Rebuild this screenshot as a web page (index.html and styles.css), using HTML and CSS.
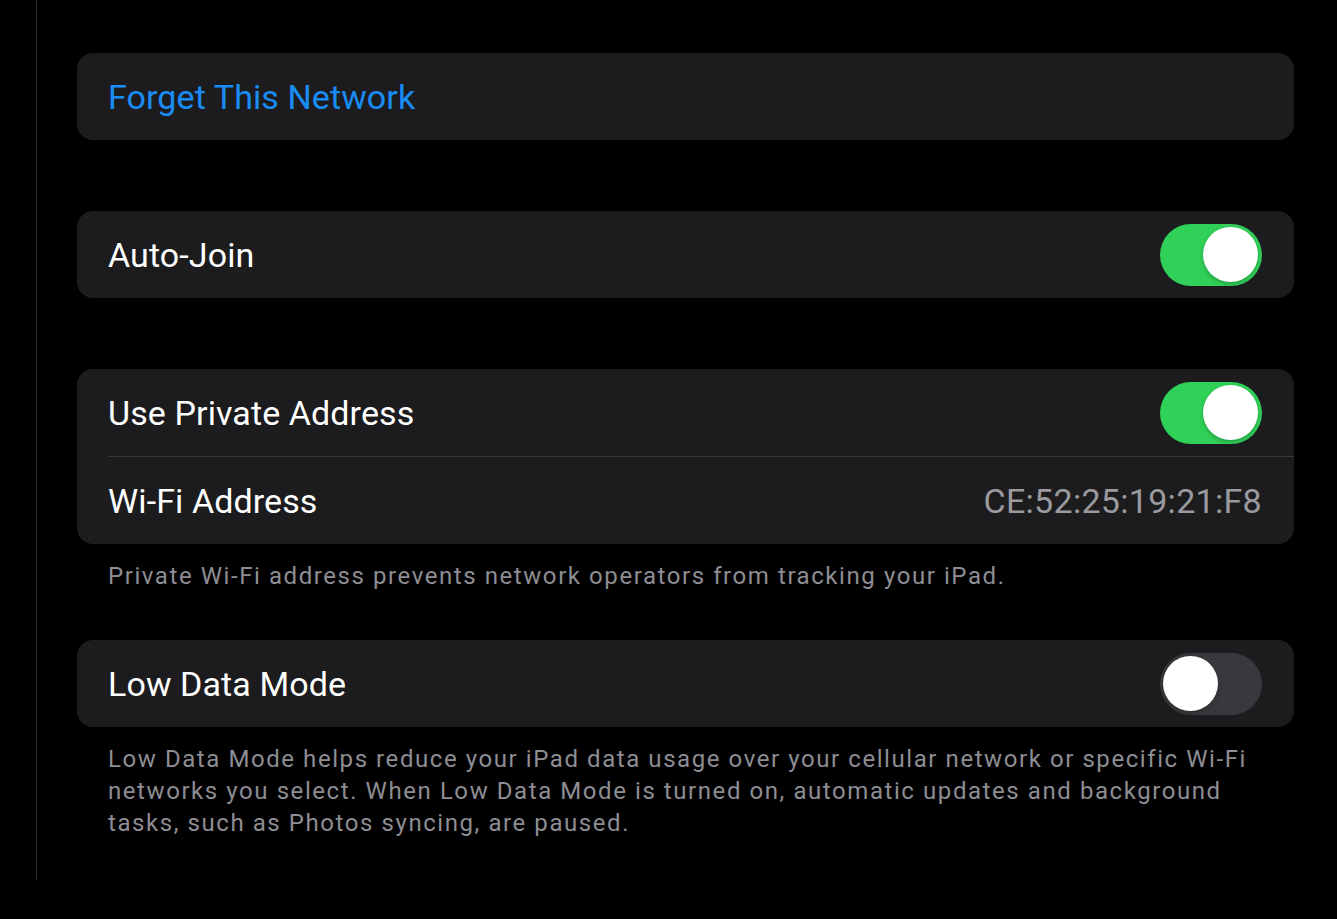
FILE: index.html
```html
<!DOCTYPE html>
<html lang="en">
<head>
<meta charset="utf-8">
<title>Wi-Fi Network</title>
<link rel="stylesheet" href="styles.css">
</head>
<body>
<div class="page">
  <div class="sidebar-edge"></div>
  <main class="content">
    <section class="group">
      <div class="row"><span class="label link">Forget This Network</span></div>
    </section>

    <section class="group">
      <div class="row">
        <span class="label">Auto-Join</span>
        <span class="toggle on"><span class="knob"></span></span>
      </div>
    </section>

    <section class="group with-footer">
      <div class="row">
        <span class="label">Use Private Address</span>
        <span class="toggle on"><span class="knob"></span></span>
      </div>
      <div class="divider"></div>
      <div class="row">
        <span class="label">Wi-Fi Address</span>
        <span class="value">CE:52:25:19:21:F8</span>
      </div>
    </section>
    <p class="footer">Private Wi-Fi address prevents network operators from tracking your iPad.</p>

    <section class="group with-footer">
      <div class="row">
        <span class="label">Low Data Mode</span>
        <span class="toggle"><span class="knob"></span></span>
      </div>
    </section>
    <p class="footer">Low Data Mode helps reduce your iPad data usage over your cellular network or specific Wi-Fi networks you select. When Low Data Mode is turned on, automatic updates and background tasks, such as Photos syncing, are paused.</p>
  </main>
</div>
</body>
</html>
```

FILE: styles.css
```css
* { box-sizing: border-box; }
html, body {
  margin: 0;
  padding: 0;
  background: #000;
  height: 100%;
}
body {
  font-family: "Roboto", "Liberation Sans", sans-serif;
  color: #fff;
  overflow: hidden;
}
.page {
  display: flex;
  height: 919px;
}
.sidebar-edge {
  width: 37px;
  height: 880px;
  border-right: 1px solid #2a2a2c;
  flex: none;
}
.content {
  flex: 1;
  padding: 53px 43px 0 40px;
}
.group {
  background: #1c1c1e;
  border-radius: 16px;
  overflow: hidden;
  margin: 0 0 71px 0;
}
.group.with-footer {
  margin-bottom: 0;
}
.row {
  height: 87px;
  display: flex;
  align-items: center;
  justify-content: space-between;
  padding: 0 32px 0 31px;
}
.label {
  font-size: 34px;
  letter-spacing: 0.1px;
  color: #fff;
}
.label.link {
  color: #1a8cf5;
}
.value {
  font-size: 34px;
  letter-spacing: 0.3px;
  color: #9a9a9f;
}
.divider {
  height: 1px;
  background: #3a3a3c;
  margin-left: 31px;
}
.toggle {
  width: 102px;
  height: 62px;
  border-radius: 31px;
  background: #39393d;
  display: flex;
  align-items: center;
  padding: 0 4px 0 3px;
}
.toggle.on {
  background: #30d158;
  justify-content: flex-end;
}
.knob {
  width: 55px;
  height: 55px;
  border-radius: 50%;
  background: #fff;
  box-shadow: 0 2px 4px rgba(0,0,0,0.25);
}
.footer {
  margin: 0 0 48px 0;
  padding: 16px 32px 0 31px;
  font-size: 24px;
  line-height: 32px;
  color: #8d8d93;
  letter-spacing: 1.57px;
}
```
